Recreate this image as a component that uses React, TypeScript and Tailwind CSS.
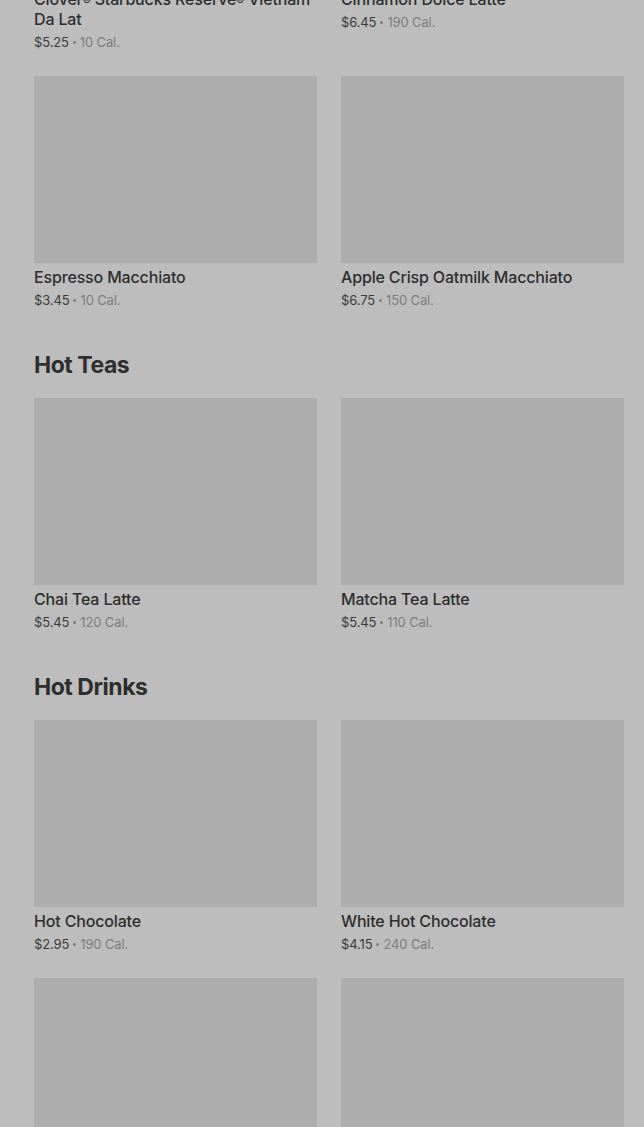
type MenuItem = {
  name: string;
  price: string;
  cal: number;
};

type MenuSection = {
  title?: string;
  items: MenuItem[];
};

const sections: MenuSection[] = [
  {
    items: [
      { name: "Clover® Starbucks Reserve® Vietnam Da Lat", price: "$5.25", cal: 10 },
      { name: "Cinnamon Dolce Latte", price: "$6.45", cal: 190 },
      { name: "Espresso Macchiato", price: "$3.45", cal: 10 },
      { name: "Apple Crisp Oatmilk Macchiato", price: "$6.75", cal: 150 },
    ],
  },
  {
    title: "Hot Teas",
    items: [
      { name: "Chai Tea Latte", price: "$5.45", cal: 120 },
      { name: "Matcha Tea Latte", price: "$5.45", cal: 110 },
    ],
  },
  {
    title: "Hot Drinks",
    items: [
      { name: "Hot Chocolate", price: "$2.95", cal: 190 },
      { name: "White Hot Chocolate", price: "$4.15", cal: 240 },
      { name: "Caramel Apple Spice", price: "$4.45", cal: 380 },
      { name: "Steamed Apple Juice", price: "$3.95", cal: 240 },
    ],
  },
];

// the ® marks are set a bit smaller so the long title wraps like the original
function ItemName({ name }: { name: string }) {
  const parts = name.split("®");
  return (
    <>
      {parts.map((part, i) => (
        <span key={i}>
          {part}
          {i < parts.length - 1 && <span className="text-[12px] leading-none">®</span>}
        </span>
      ))}
    </>
  );
}

function ItemCard({ item }: { item: MenuItem }) {
  return (
    <div className="flex flex-col">
      <div className="h-[187px] w-full bg-[#adadad]" />
      <div className="mt-[4px] text-[16px] font-medium leading-5 tracking-[-0.01em] text-[#2e2e2e]">
        <ItemName name={item.name} />
      </div>
      <div className="mt-[3px] flex h-5 items-center text-[13px] leading-5 tracking-[-0.01em]">
        <span className="text-[#3b3b3b]">{item.price}</span>
        <span className="mx-[4px] h-[3px] w-[3px] rounded-full bg-[#7e7e7e]" />
        <span className="text-[#7e7e7e]">{item.cal} Cal.</span>
      </div>
    </div>
  );
}

export default function App() {
  return (
    <div
      className="min-h-screen overflow-hidden bg-[#bdbdbd]"
      style={{ fontFamily: "Inter, 'Noto Sans', sans-serif" }}
    >
      <div className="-mt-[202px] pl-[34px] pr-[20px]">
        {sections.map((section, i) => (
          <section key={i} className={i === 0 ? "" : "pt-[39px]"}>
            {section.title && (
              <h2 className="mb-[17px] text-[23px] font-bold leading-8 tracking-[-0.02em] text-[#2e2e2e]">
                {section.title}
              </h2>
            )}
            <div className="grid grid-cols-2 gap-x-6 gap-y-6">
              {section.items.map((item) => (
                <ItemCard key={item.name} item={item} />
              ))}
            </div>
          </section>
        ))}
      </div>
    </div>
  );
}
